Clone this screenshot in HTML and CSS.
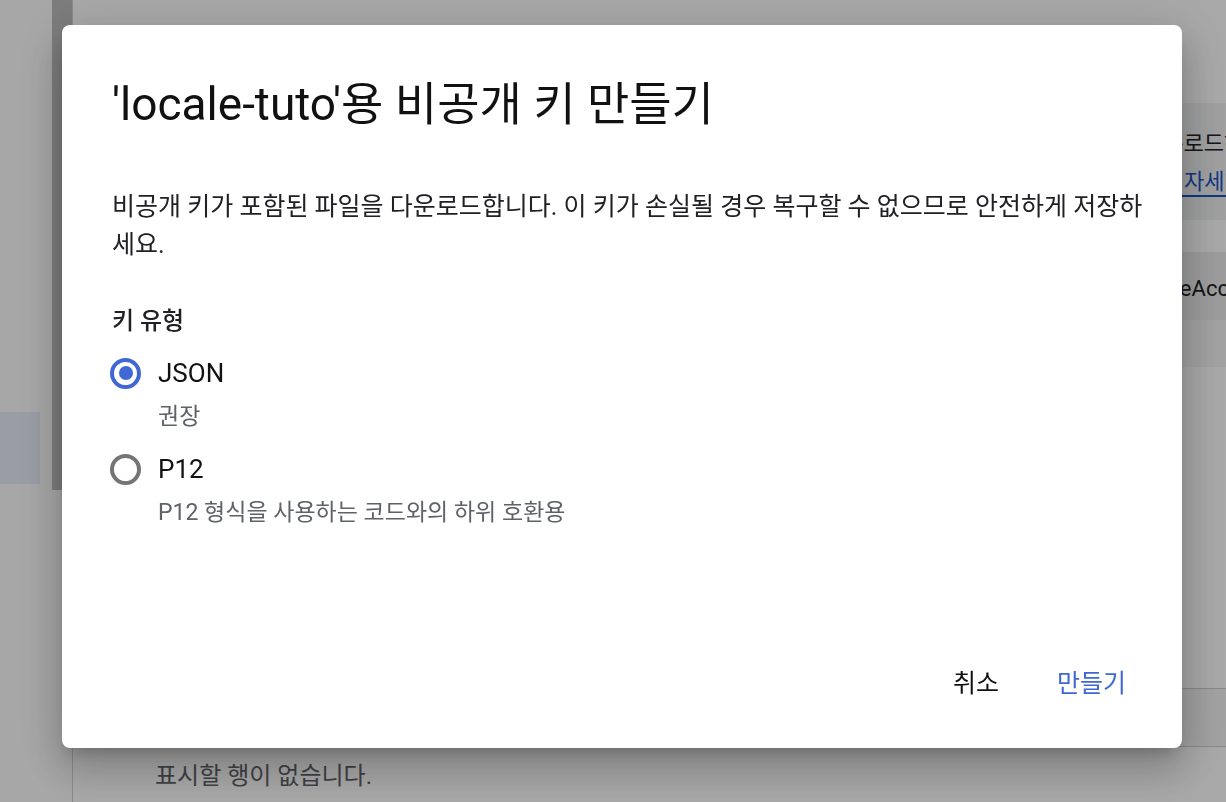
FILE: index.html
```html
<!doctype html>
<html lang="ko">
  <head>
    <meta charset="UTF-8" />
    <meta name="viewport" content="width=device-width, initial-scale=1.0" />
    <title>비공개 키 만들기</title>
    <link rel="stylesheet" href="styles.css">
  </head>
  <body>
    <div class="page">
      <nav class="sidebar">
        <div class="scroll-thumb"></div>
        <div class="nav-item active"></div>
      </nav>

      <main class="content">
        <div class="top-space"></div>
        <div class="info-box">
          <p class="info-line">다운로드하세요</p>
          <a class="info-link" href="#">키에 자세히 알아보기</a>
        </div>
        <div class="gap"></div>
        <div class="table-head">iceAccount</div>
        <div class="table-body"></div>
        <div class="table-row"></div>
        <p class="empty">표시할 행이 없습니다.</p>
      </main>
    </div>

    <div class="backdrop"></div>

    <div class="dialog">
      <h1 class="dialog-title">'locale-tuto'용 비공개 키 만들기</h1>
      <p class="dialog-text">
        비공개 키가 포함된 파일을 다운로드합니다. 이 키가 손실될 경우 복구할 수 없으므로 안전하게 저장하세요.
      </p>

      <div class="field-label">키 유형</div>

      <label class="radio-row">
        <input type="radio" name="keytype" value="json" checked />
        <span class="radio-mark"></span>
        <span class="radio-text">JSON</span>
      </label>
      <div class="radio-hint">권장</div>

      <label class="radio-row">
        <input type="radio" name="keytype" value="p12" />
        <span class="radio-mark"></span>
        <span class="radio-text">P12</span>
      </label>
      <div class="radio-hint">P12 형식을 사용하는 코드와의 하위 호환용</div>

      <div class="dialog-actions">
        <button class="btn btn-cancel">취소</button>
        <button class="btn btn-create">만들기</button>
      </div>
    </div>
  </body>
</html>
```

FILE: styles.css
```css
html,
body {
  margin: 0;
  height: 100%;
  overflow: hidden;
}
body {
  font-family: Roboto, "Noto Sans CJK KR", sans-serif;
  background-color: #fff;
  color: #202124;
}
.page {
  display: flex;
  height: 100%;
}
.sidebar {
  width: 72px;
  flex-shrink: 0;
  position: relative;
  background-color: #fdfdfd;
  border-right: 1px solid #d0d3d7;
}
.scroll-thumb {
  position: absolute;
  left: 52px;
  top: 0;
  width: 20px;
  height: 490px;
  background-color: #bdbdbd;
}
.nav-item.active {
  position: absolute;
  left: 0;
  top: 412px;
  width: 40px;
  height: 72px;
  background-color: #e8eefb;
}
.content {
  flex: 1;
  min-width: 0;
  overflow: hidden;
  display: flex;
  flex-direction: column;
}
.top-space {
  height: 103px;
}
.info-box {
  height: 117px;
  background-color: #f1f2f3;
  padding-left: 1070px;
  box-sizing: border-box;
  font-size: 22px;
  white-space: nowrap;
}
.info-line {
  margin: 0;
  padding-top: 28px;
  line-height: 26px;
}
.info-link {
  display: inline-block;
  margin-top: 12px;
  margin-left: -5px;
  color: #1a55c8;
  text-decoration: none;
  border-bottom: 2px solid #1a55c8;
  line-height: 26px;
}
.gap {
  height: 32px;
}
.table-head {
  height: 68px;
  background-color: #ededed;
  padding-left: 1090px;
  padding-top: 24px;
  box-sizing: border-box;
  font-size: 22px;
  white-space: nowrap;
}
.table-body {
  height: 47px;
  background-color: #f6f6f6;
}
.table-row {
  margin-top: 321px;
  height: 57px;
  border-top: 1px solid #cfcfcf;
  border-bottom: 1px solid #cfcfcf;
  background-color: #f4f4f4;
}
.empty {
  margin: 9px 0 0 82px;
  font-size: 24px;
  color: #5f6368;
}
.backdrop {
  position: fixed;
  inset: 0;
  background-color: rgba(0, 0, 0, 0.34);
}

/* dialog */
.dialog {
  position: fixed;
  left: 62px;
  top: 25px;
  width: 1120px;
  height: 723px;
  box-sizing: border-box;
  padding: 51px 30px 43px 50px;
  background-color: #fff;
  border-radius: 8px;
  display: flex;
  flex-direction: column;
  box-shadow: 0 24px 38px 3px rgba(0, 0, 0, 0.14), 0 9px 46px 8px rgba(0, 0, 0, 0.12),
    0 11px 15px -7px rgba(0, 0, 0, 0.2);
}
.dialog-title {
  margin: 0;
  font-size: 46px;
  font-weight: 400;
  line-height: 56px;
  color: #111;
}
.dialog-text {
  margin: 56px 0 0;
  font-size: 25px;
  line-height: 38px;
  color: #202124;
}
.field-label {
  margin-top: 41px;
  font-size: 24px;
  line-height: 32px;
  font-weight: 500;
  color: #202124;
}
.radio-row {
  display: flex;
  align-items: center;
  height: 32px;
  cursor: pointer;
}
.field-label + .radio-row {
  margin-top: 20px;
}
.radio-hint + .radio-row {
  margin-top: 22px;
}
.radio-row input {
  display: none;
}
.radio-mark {
  width: 31px;
  height: 31px;
  box-sizing: border-box;
  border: 4px solid #757575;
  border-radius: 50%;
  margin-left: -2px;
  margin-right: 17px;
  display: flex;
  align-items: center;
  justify-content: center;
}
.radio-row input:checked + .radio-mark {
  border-color: #3f68d4;
}
.radio-row input:checked + .radio-mark::after {
  content: '';
  width: 14px;
  height: 14px;
  border-radius: 50%;
  background-color: #3f68d4;
}
.radio-text {
  font-size: 26px;
  color: #111;
}
.radio-hint {
  margin-top: 14px;
  margin-left: 46px;
  font-size: 23px;
  line-height: 28px;
  color: #5f6368;
}
.dialog-actions {
  margin-top: auto;
  display: flex;
  justify-content: flex-end;
  gap: 26px;
  padding-right: 10px;
}
.btn {
  height: 48px;
  padding: 0 16px;
  border: none;
  background: none;
  font-family: inherit;
  font-size: 25px;
  cursor: pointer;
}
.btn-cancel {
  color: #111;
}
.btn-create {
  color: #3f68d4;
}
```
